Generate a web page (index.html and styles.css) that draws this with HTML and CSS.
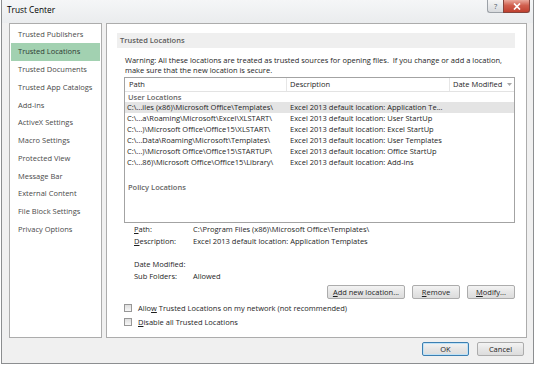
FILE: index.html
```html
<!DOCTYPE html>
<html lang="en">
<head>
    <meta charset="UTF-8">
    <title>Trust Center</title>
    <link rel="stylesheet" href="styles.css">
</head>
<body>
    <div class="window">
        <div class="titlebar">
            <span class="title">Trust Center</span>
            <div class="controls">
                <span class="help">?</span>
                <span class="close">
                    <svg width="8" height="7" viewBox="0 0 8 7"><path d="M1 0.5 L7 6.5 M7 0.5 L1 6.5" stroke="#fff" stroke-width="1.7"/></svg>
                </span>
            </div>
        </div>

        <div class="main">
            <ul class="nav">
                <li>Trusted Publishers</li>
                <li class="active">Trusted Locations</li>
                <li>Trusted Documents</li>
                <li>Trusted App Catalogs</li>
                <li>Add-ins</li>
                <li>ActiveX Settings</li>
                <li>Macro Settings</li>
                <li>Protected View</li>
                <li>Message Bar</li>
                <li>External Content</li>
                <li>File Block Settings</li>
                <li>Privacy Options</li>
            </ul>

            <div class="panel">
                <div class="section-head">Trusted Locations</div>
                <p class="warning">Warning: All these locations are treated as trusted sources for opening files.&nbsp; If you change or add a location,<br>make sure that the new location is secure.</p>

                <div class="list">
                    <div class="list-head">
                        <span class="col-path">Path</span>
                        <span class="col-desc">Description</span>
                        <span class="col-date">Date Modified
                            <svg width="5" height="3" viewBox="0 0 5 3"><path d="M0 0 H5 L2.5 3 Z" fill="#a8a8a8"/></svg>
                        </span>
                    </div>
                    <div class="group">User Locations</div>
                    <div class="row selected"><span class="col-path">C:\...iles (x86)\Microsoft Office\Templates\</span><span class="col-desc">Excel 2013 default location: Application Te...</span></div>
                    <div class="row"><span class="col-path">C:\...a\Roaming\Microsoft\Excel\XLSTART\</span><span class="col-desc">Excel 2013 default location: User StartUp</span></div>
                    <div class="row"><span class="col-path">C:\...)\Microsoft Office\Office15\XLSTART\</span><span class="col-desc">Excel 2013 default location: Excel StartUp</span></div>
                    <div class="row"><span class="col-path">C:\...Data\Roaming\Microsoft\Templates\</span><span class="col-desc">Excel 2013 default location: User Templates</span></div>
                    <div class="row"><span class="col-path">C:\...)\Microsoft Office\Office15\STARTUP\</span><span class="col-desc">Excel 2013 default location: Office StartUp</span></div>
                    <div class="row"><span class="col-path">C:\...86)\Microsoft Office\Office15\Library\</span><span class="col-desc">Excel 2013 default location: Add-ins</span></div>
                    <div class="group policy">Policy Locations</div>
                </div>

                <div class="details">
                    <span><u>P</u>ath:</span><span>C:\Program Files (x86)\Microsoft Office\Templates\</span>
                    <span><u>D</u>escription:</span><span>Excel 2013 default location: Application Templates</span>
                    <span>&nbsp;</span><span></span>
                    <span>Date Modified:</span><span></span>
                    <span>Sub Folders:</span><span>Allowed</span>
                </div>

                <div class="actions">
                    <button class="btn btn-add"><u>A</u>dd new location...</button>
                    <button class="btn btn-small"><u>R</u>emove</button>
                    <button class="btn btn-small"><u>M</u>odify...</button>
                </div>

                <label class="check"><span class="box"></span><span>Allo<u>w</u> Trusted Locations on my network (not recommended)</span></label>
                <label class="check"><span class="box"></span><span><u>D</u>isable all Trusted Locations</span></label>
            </div>
        </div>

        <div class="footer">
            <button class="btn btn-footer default">OK</button>
            <button class="btn btn-footer">Cancel</button>
        </div>
    </div>
</body>
</html>
```

FILE: styles.css
```css
* { box-sizing: border-box; }
body { margin: 0; background: #fff; font-family: "Open Sans", "Segoe UI", sans-serif; font-size: 7.5px; color: #1e1e1e; }

.window { width: 533px; height: 364px; margin-left: 1px; border: 1px solid #8c8e90; border-top: 0; background: #f0f0f0; display: flex; flex-direction: column; }

.titlebar { height: 23px; flex: none; display: flex; justify-content: space-between; padding-left: 5px; background: linear-gradient(#f5f6f7, #eaecee); }
.title { font-size: 8.3px; line-height: 20px; color: #000; }
.controls { display: flex; align-self: flex-start; margin-right: 3px; }
.help { width: 16px; height: 13px; border: 1px solid #9ca1a7; border-top: 0; border-right: 0; border-radius: 0 0 0 3px; background: linear-gradient(#f6f6f6, #d8dadd); text-align: center; font-size: 7.5px; line-height: 12px; color: #4d5866; }
.close { width: 27px; height: 13px; border: 1px solid #86443c; border-top: 0; border-radius: 0 0 3px 0; background: linear-gradient(#eaa99c, #d0604f 45%, #c0402f); display: flex; align-items: center; justify-content: center; }

.main { height: 315px; flex: none; display: flex; gap: 4px; padding: 0 6px 0 7px; }

.nav { width: 93px; margin: 0; padding: 1.5px 0 0; list-style: none; background: #fff; border: 1px solid #acacac; color: #4a4a4a; }
.nav li { height: 17.75px; line-height: 17.75px; padding-left: 8px; white-space: nowrap; }
.nav li.active { margin: 0 1px; padding-left: 7px; background: #a2d1b1; color: #2f3a33; }

.panel { flex: 1; background: #fff; border: 1px solid #acacac; padding: 9px 11px 0 10px; }
.section-head { height: 15px; line-height: 15px; padding-left: 3px; background: #efefef; color: #5b5b5b; font-weight: 600; }
.warning { margin: 7px 0 2px 8px; line-height: 10px; white-space: nowrap; }

.list { height: 146px; margin-left: 7px; border: 1px solid #a3a3a3; overflow: hidden; }
.list-head { display: flex; height: 14px; line-height: 13px; border-bottom: 1px solid #e3e3e3; }
.list-head .col-path { padding-left: 4px; }
.list-head .col-desc { border-left: 1px solid #e6e6e6; padding-left: 3px; }
.list-head .col-date { flex: 1; border-left: 1px solid #e6e6e6; padding-left: 3px; display: flex; align-items: center; gap: 5px; }
.col-path { width: 161px; flex: none; white-space: nowrap; overflow: hidden; }
.col-desc { width: 163px; flex: none; white-space: nowrap; overflow: hidden; }

.group { height: 10px; line-height: 10px; padding-left: 3px; color: #666; font-weight: 600; }
.group.policy { margin-top: 14px; }
.row { display: flex; height: 11px; line-height: 11px; }
.row .col-path { padding-left: 2px; }
.row .col-desc { padding-left: 4px; }
.row.selected { background: #e4e4e4; }

.details { display: grid; grid-template-columns: 59px 1fr; margin: 1px 0 0 17px; line-height: 11.7px; }

.actions { display: flex; justify-content: flex-end; gap: 7px; margin-top: 2.5px; }
.btn { height: 14px; padding: 0; border: 1px solid #acacac; border-radius: 2px; background: linear-gradient(#f3f3f3, #e6e6e6 50%, #dcdcdc); font: inherit; color: #1e1e1e; line-height: 12px; }
.btn-add { width: 78px; }
.btn-small { width: 48px; }

.check { display: flex; align-items: center; height: 14px; margin-left: 7px; }
.check:first-of-type { margin-top: 2px; }
.box { width: 8px; height: 8px; margin-right: 6px; border: 1px solid #979797; background: linear-gradient(#dedede, #f7f7f7); }

.footer { flex: 1; display: flex; justify-content: flex-end; gap: 8px; padding: 4px 9px 0 0; }
.btn-footer { width: 47px; }
.btn-footer.default { border-color: #3c7fb1; box-shadow: inset 0 0 0 1px #bfe2f7; }
```
